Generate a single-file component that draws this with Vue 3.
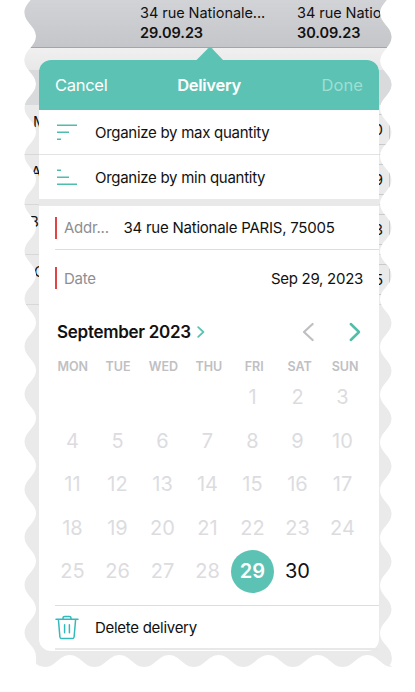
<script setup>
const STEP = 47.7

function tornEdge() {
  let y = -11.35
  let x = 36
  let d = `M ${x} ${y}`
  while (y < 650) {
    const nx = x === 36 ? 24.5 : 36
    const ny = y + STEP / 2
    const m = (y + ny) / 2
    d += ` C ${x} ${m - 2} ${nx} ${m + 2} ${nx} ${ny}`
    x = nx
    y = ny
  }
  d += ' L 36 664 Q 40 667 45 667'
  let bx = 45
  let by = 667
  while (bx < 369) {
    const nx = bx + 24.8
    const ny = by === 667 ? 655 : 667
    const m = (bx + nx) / 2
    d += ` C ${m - 2} ${by} ${m + 2} ${ny} ${nx} ${ny}`
    bx = nx
    by = ny
  }
  d += ' C 378 655 383 664 389 666 Q 393 662 391.5 656'
  let ry = 657
  let rx = 391.5
  while (ry > -12) {
    const nx = rx === 391.5 ? 380 : 391.5
    const ny = ry - STEP / 2
    const m = (ry + ny) / 2
    d += ` C ${rx} ${m + 2} ${nx} ${m - 2} ${nx} ${ny}`
    rx = nx
    ry = ny
  }
  return `path("${d} Z")`
}
const edge = tornEdge()

const columns = [
  { name: '34 rue Nationale...', date: '29.09.23' },
  { name: '34 rue Nationale', date: '30.09.23' },
]
const rows = [
  { label: 'M', value: '0' },
  { label: 'A', value: '9' },
  { label: 'B', value: '3' },
  { label: 'C', value: '5' },
]
const weekdays = ['MON', 'TUE', 'WED', 'THU', 'FRI', 'SAT', 'SUN']
const days = [null, null, null, null, ...Array.from({ length: 30 }, (_, i) => i + 1)]
</script>

<template>
  <main class="screen">
    <div class="sheet" :style="{ clipPath: edge }">
      <div class="sheet-head">
        <div v-for="c in columns" :key="c.date" class="col">
          <span class="col-name">{{ c.name }}</span>
          <b class="col-date">{{ c.date }}</b>
        </div>
      </div>
      <div class="sheet-gap"></div>
      <div class="sheet-band"></div>
      <div v-for="r in rows" :key="r.label" class="sheet-row">
        <span :class="['letter', 'letter-' + r.label]">{{ r.label }}</span>
        <span class="qty">{{ r.value }}</span>
      </div>
    </div>

    <section class="popover">
      <svg class="arrow" width="30" height="14" viewBox="0 0 30 14">
        <path d="M0.5 14 L13.2 1.2 Q15 -0.2 16.8 1.2 L29 14 Z" fill="#5cc3b4" />
      </svg>
      <header class="bar">
        <span class="cancel">Cancel</span>
        <b class="title">Delivery</b>
        <span class="done">Done</span>
      </header>

      <div class="action">
        <svg class="icon" width="24" height="24" viewBox="0 0 24 24" stroke="#4fbdad" stroke-width="1.4">
          <path d="M2 5.3H22M2 12.3H14M2 19.3H6" />
        </svg>
        <span class="max">Organize by max quantity</span>
      </div>
      <div class="action second">
        <svg class="icon" width="24" height="24" viewBox="0 0 24 24" stroke="#4fbdad" stroke-width="1.4">
          <path d="M2 5.3H6M2 12.3H14M2 19.3H22" />
        </svg>
        <span class="min">Organize by min quantity</span>
      </div>

      <div class="field address">
        <i class="mark"></i>
        <span class="label">Addr...</span>
        <span class="value">34 rue Nationale PARIS, 75005</span>
      </div>
      <div class="field date">
        <i class="mark"></i>
        <span class="label">Date</span>
        <span class="value">Sep 29, 2023</span>
      </div>

      <div class="month">
        <b>September 2023</b>
        <svg class="more" width="8" height="14" viewBox="0 0 8 14" fill="none" stroke="#5cc3b4" stroke-width="1.8" stroke-linecap="round" stroke-linejoin="round">
          <path d="M1.2 2.2L6.4 7L1.2 11.8" />
        </svg>
        <svg class="prev" width="12" height="20" viewBox="0 0 12 20" fill="none" stroke="#bfbfc2" stroke-width="2.2" stroke-linecap="round" stroke-linejoin="round">
          <path d="M10.6 2L2 10L10.6 18" />
        </svg>
        <svg class="next" width="12" height="20" viewBox="0 0 12 20" fill="none" stroke="#52bda9" stroke-width="2.5" stroke-linecap="round" stroke-linejoin="round">
          <path d="M1.8 2L10 10L1.8 18" />
        </svg>
      </div>
      <div class="weekdays">
        <span v-for="w in weekdays" :key="w">{{ w }}</span>
      </div>
      <div class="days">
        <span v-for="(d, i) in days" :key="i" :class="{ selected: d === 29, open: d === 30 }">{{ d }}</span>
      </div>

      <div class="delete">
        <svg class="trash" width="24" height="26" viewBox="0 0 24 26" fill="none" stroke="#35babb" stroke-width="1.5" stroke-linecap="round" stroke-linejoin="round">
          <path d="M1 5.2H23M8 4.9V4.2Q8 2.5 9.8 2.5H14.2Q16 2.5 16 4.2V4.9M3.4 5.5L4.9 23Q5.1 24.6 6.8 24.6H17.2Q18.9 24.6 19.1 23L20.6 5.5M9.6 10.8V18.8M14.4 10.8V18.8" />
        </svg>
        <span class="delete-text">Delete delivery</span>
      </div>
    </section>
  </main>
</template>

<style>
body {
  margin: 0;
  background: #fff;
}
</style>

<style scoped>
.screen {
  position: relative;
  width: 415px;
  height: 692px;
  overflow: hidden;
  background: #fff;
  color: #111;
  font-family: Inter, "Liberation Sans", sans-serif;
  font-size: 15px;
}
.sheet {
  width: 415px;
  height: 692px;
  background: #eaeaea;
}
.sheet-head {
  box-sizing: border-box;
  height: 48px;
  padding: 3px 0 0 140px;
  display: grid;
  grid-template-columns: 157px 157px;
  background: linear-gradient(#d2d3d7, #c5c6ca);
  border-bottom: 1px solid #a5a5a9;
}
.col {
  display: flex;
  flex-direction: column;
  line-height: 20px;
  white-space: nowrap;
  font-size: 14.5px;
  letter-spacing: -0.05px;
}
.col-date {
  font-weight: 600;
}
.sheet-gap {
  height: 22px;
  background: linear-gradient(#f0f0f0, #e8e8e8);
}
.sheet-band {
  height: 35px;
  background: #d9dadb;
}
.sheet-row {
  box-sizing: border-box;
  height: 50px;
  padding: 9px 25px 10px 0;
  display: flex;
  justify-content: space-between;
  border-bottom: 1px solid #d8d8da;
}
.letter {
  padding-left: 33px;
  line-height: 16px;
}
.letter-A { padding-left: 31px; }
.letter-B { padding-left: 29px; line-height: 15px; }
.letter-C { padding-left: 34px; }
.qty {
  box-sizing: border-box;
  width: 40px;
  height: 31px;
  padding-right: 6px;
  border: 1px solid #c9c9cc;
  border-radius: 5px;
  text-align: right;
  line-height: 30px;
}
.popover {
  position: absolute;
  left: 39px;
  top: 60px;
  width: 340px;
  height: 591px;
  border-radius: 12px;
  background: #fff;
  letter-spacing: -0.28px;
}
.arrow {
  position: absolute;
  left: 156px;
  top: -13px;
}
.bar {
  box-sizing: border-box;
  height: 50px;
  padding: 0 16px;
  display: grid;
  grid-template-columns: 1fr auto 1fr;
  align-items: center;
  border-radius: 12px 12px 0 0;
  background: #5cc3b4;
  color: #fff;
  font-size: 16.5px;
}
.title {
  font-weight: 600;
}
.done {
  text-align: right;
  color: #9ddfd3;
  letter-spacing: 0.1px;
}
.action {
  box-sizing: border-box;
  height: 45px;
  padding-left: 16px;
  display: flex;
  align-items: center;
  gap: 16px;
  border-bottom: 1px solid #e4e4e6;
}
.second {
  height: 51px;
  border-bottom: 7px solid #e9e9e9;
}
.field {
  box-sizing: border-box;
  display: flex;
  align-items: center;
  margin-left: 16px;
  padding-right: 16px;
}
.address {
  height: 44px;
  border-bottom: 1px solid #dedee0;
  letter-spacing: -0.24px;
}
.date {
  height: 56px;
}
.mark {
  width: 2px;
  height: 22px;
  margin-right: 7px;
  background: #e04545;
}
.label {
  width: 59.5px;
  color: #8e8e92;
}
.date .value {
  margin-left: auto;
}
.month {
  box-sizing: border-box;
  height: 50px;
  padding: 2px 18px 0;
  display: flex;
  align-items: center;
  font-size: 17px;
}
.month b {
  font-weight: 600;
}
.more {
  margin-left: 6px;
}
.prev {
  margin-left: auto;
  margin-right: 35px;
}
.weekdays {
  padding: 0 11px;
  height: 19px;
  display: grid;
  grid-template-columns: repeat(7, 45.4px);
  text-align: center;
  color: #c0c0c3;
  font-size: 12.5px;
  font-weight: 600;
  line-height: 22px;
  letter-spacing: 0;
}
.days {
  box-sizing: border-box;
  height: 230px;
  padding: 0.5px 11px 0;
  display: grid;
  grid-template-columns: repeat(7, 45px);
  grid-template-rows: repeat(5, 43.5px);
  justify-items: center;
  align-items: center;
  align-content: start;
  color: #dcdcdf;
  font-size: 20px;
  letter-spacing: 0;
}
.days .selected {
  width: 43px;
  height: 43px;
  border-radius: 50%;
  background: #5cc3b4;
  color: #fff;
  font-weight: 600;
  line-height: 43px;
  text-align: center;
}
.days .open {
  color: #111;
}
.delete {
  box-sizing: border-box;
  height: 45px;
  margin-left: 16px;
  display: flex;
  align-items: center;
  gap: 16px;
  border-top: 1px solid #dedee0;
  border-bottom: 2px solid #e8e8e8;
}
.delete-text {
  padding-top: 1px;
}
</style>
